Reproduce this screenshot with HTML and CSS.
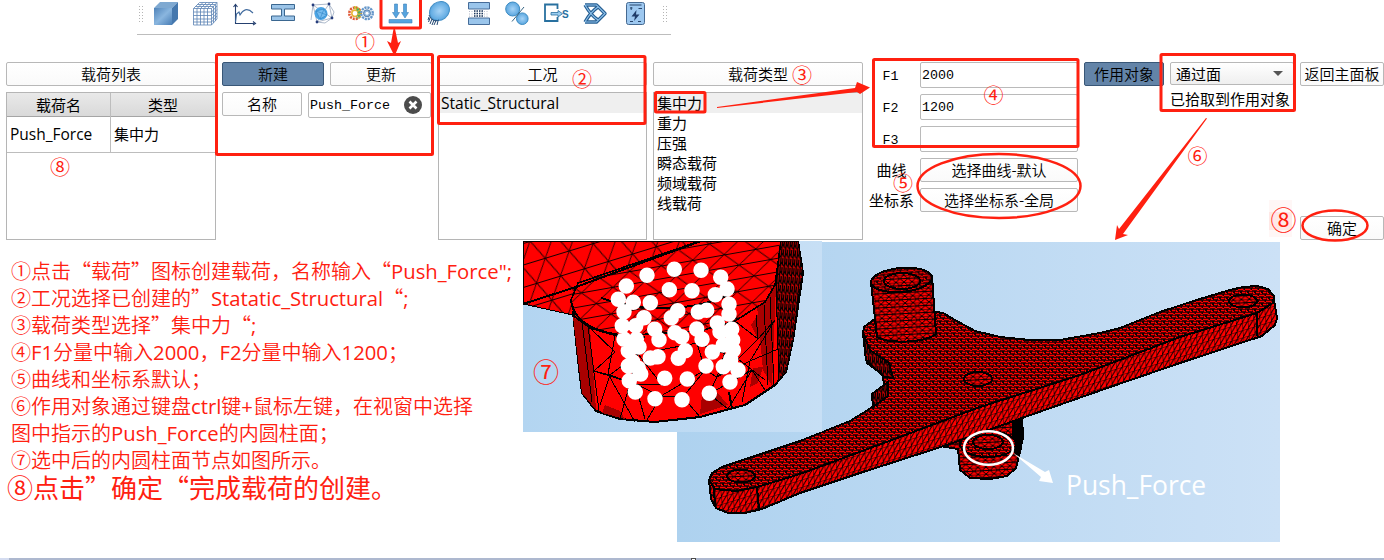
FILE: index.html
```html
<!DOCTYPE html>
<html lang="zh-CN">
<head>
<meta charset="utf-8">
<title>载荷创建</title>
<link rel="stylesheet" href="styles.css">
</head>
<body>
<header class="toolbar">
  <i class="grip"></i>
  <div class="tools">
    <svg class="tool" viewBox="0 0 39 28"><defs><linearGradient id="g1" x1="0" y1="0" x2="1" y2="1"><stop offset="0" stop-color="#4f83b9"/><stop offset=".5" stop-color="#8ab6df"/><stop offset="1" stop-color="#487db5"/></linearGradient><radialGradient id="g2"><stop offset="0" stop-color="#a6d3f6"/><stop offset="1" stop-color="#5ba7e0"/></radialGradient></defs><path d="M8 8 14 2H32L26 8Z" fill="#7fa9d1"/><path d="M26 8 32 2V19L26 25Z" fill="#4578ae"/><path d="M8 8H26V25H8Z" fill="url(#g1)"/></svg>
    <svg class="tool" viewBox="0 0 39 28"><path d="M8.500 8.500H26.500V25H8.500Z M8.500 8.500 14.500 2.500H32V19L26.500 25 M26.500 8.500 32 2.500 M12 8.500V25M15.500 8.500V25M19 8.500V25M22.500 8.500V25 M8.500 12H26.500L32 6M8.500 15.500H26.500L32 9.500M8.500 19H26.500L32 13M8.500 22H26.500L32 16 M10.500 6.500H28.500V23M12.500 4.500H30.500V21 M12 8.500 18 2.500M15.500 8.500 21.500 2.500M19 8.500 25 2.500M22.500 8.500 28.500 2.500" fill="#fff" stroke="#5c83b4" stroke-width=".8"/></svg>
    <svg class="tool" viewBox="0 0 39 28" fill="none" stroke="#25406f" stroke-width="1.100"><path d="M11.500 5V23.500H30M9.500 7 11.500 4.500 13.500 7M29 21.500 31.500 23.500 29 25"/><path d="M11.500 22 12.500 14 15 12 16 15C19 10 23 7 29 13" stroke="#416b9e"/></svg>
    <svg class="tool" viewBox="0 0 39 28" fill="#9bc4e8" stroke="#3b6790"><path d="M8.500 4.500H31.500V9H21.500V16H31.500V20.500H8.500V16H18.500V9H8.500Z"/></svg>
    <svg class="tool" viewBox="0 0 39 28"><path d="M11 5 27 4 30 18 15 22ZM11 5 30 18M27 4 15 22M9 20 11 5M27 4 32 12 30 18 23 23 15 22" fill="none" stroke="#8b9cb5" stroke-width=".7"/><circle cx="19" cy="13.500" r="6.500" fill="#4ba4e4"/><path d="M14 11 22 9 25 15 18 19Z M14 11 25 15M22 9 18 19" fill="#77bdf0" stroke="#2e83c4" stroke-width=".6"/><g fill="#263d7d"><circle cx="11" cy="5" r="1.400"/><circle cx="27" cy="4" r="1.400"/><circle cx="30" cy="18" r="1.400"/><circle cx="15" cy="22" r="1.400"/></g></svg>
    <svg class="tool" viewBox="0 0 39 28" fill="none"><circle cx="14" cy="13.300" r="5.700" stroke="#e05937" stroke-width="2.600" stroke-dasharray="2 1"/><path d="M13 7.500A6 6 0 0 1 17 18" stroke="#c6bd30" stroke-width="3" stroke-dasharray="2 .8"/><circle cx="14" cy="13.300" r="3.200" stroke="#e9b337" stroke-width="1.600"/><path d="M16 9A6 6 0 0 1 16 18" stroke="#51ad5a" stroke-width="2.500" stroke-dasharray="2 1"/><circle cx="26" cy="13.300" r="5.800" stroke="#6697ca" stroke-width="2.400" stroke-dasharray="2.200 .8"/><circle cx="26" cy="13.300" r="3.500" fill="#8fb5db" stroke="#547fac"/><circle cx="26" cy="13.300" r="1.500" fill="#fff"/></svg>
    <svg class="tool" viewBox="0 0 39 28" fill="#55a4df" stroke="#3e82b9" stroke-width=".6"><path d="M14.500 4H17.500V12.500H19.500L16 18 12.500 12.500H14.500ZM23.500 4H26.500V12.500H28.500L25 18 21.500 12.500H23.500Z"/><path d="M9 19.500H32V23H9Z"/></svg>
    <svg class="tool" viewBox="0 0 39 28"><ellipse cx="20.500" cy="11" rx="10.500" ry="9" transform="rotate(-38 20.500 11)" fill="url(#g2)" stroke="#438fc6"/><path d="M10 15C12 20 16 22 20 20M10 17 9 20M11 18 9.500 22M13 19 11 24M15 20 13 25M17 20.500 15 25M19 21 18 25" fill="none" stroke="#234872" stroke-width="1"/></svg>
    <svg class="tool" viewBox="0 0 39 28"><path d="M10.500 2.500H31.500V9H10.500ZM10.500 18H31.500V24.500H10.500Z" fill="#9ac5eb" stroke="#466c99"/><path d="M11 11.500H31M11 14H31M11 16.200H31" stroke="#b5bbc9" stroke-dasharray="1 1.500"/><path d="M16 11H26M16 13.500H26M16 16H26" stroke="#1d385c" stroke-width="1.400" stroke-dasharray="1.500 1"/></svg>
    <svg class="tool" viewBox="0 0 39 28" fill="url(#g2)" stroke="#3c8bc2"><circle cx="15.700" cy="9" r="7"/><circle cx="25.300" cy="18.700" r="5.800"/><path d="M27 7 15 21.500" stroke="#346281"/></svg>
    <svg class="tool" viewBox="0 0 39 28"><path d="M21.500 9V4.500H9V21H21.500V17" fill="none" stroke="#28709f" stroke-width="1.800"/><path d="M15 12.500H22V10.500L26.500 13.700 22 17V15H15Z" fill="#9bcdf0" stroke="#28709f" stroke-width=".8"/><text x="26" y="17.500" class="icon-s">S</text></svg>
    <svg class="tool" viewBox="0 0 39 28" fill="none" stroke="#245d91" stroke-width="3.400"><path d="M10 5H21.500L30 13.500 21.500 22H10M10 5 C14 12 17 16 23 20M10 22C14 15 17 11 23 7" stroke-linejoin="round"/><path d="M10 5H21.500L30 13.500 21.500 22H10M10 5 C14 12 17 16 23 20M10 22C14 15 17 11 23 7" stroke="#8fc2eb" stroke-width="1.100"/></svg>
    <svg class="tool" viewBox="0 0 39 28"><rect x="12.500" y="2.500" width="18" height="22" rx="2" fill="#9dc8f0" stroke="#456991"/><path d="M15.500 5H27.500M16 8H18.500M17.200 7V10M24.500 8.500H28M16 21.500H19M24 21.500H27" stroke="#29466d"/><path d="M22.500 10 17.500 16.500H21L20 21 25.500 14.500H22Z" fill="#203c69"/></svg>
  </div>
  <i class="grip"></i>
</header>

<main class="panel">
  <section class="stack">
    <button class="btn">载荷列表</button>
    <div class="box table">
      <div class="tr th"><span>载荷名</span><span>类型</span></div>
      <div class="tr td"><span>Push_Force</span><span>集中力</span></div>
    </div>
  </section>
  <section class="stack">
    <div class="pair"><button class="btn primary">新建</button><button class="btn">更新</button></div>
    <div class="pair name"><button class="btn">名称</button>
      <div class="field">Push_Force<svg class="clear" viewBox="0 0 18 18"><circle cx="9" cy="9" r="9" fill="#4c4c4c"/><path d="M5.500 5.500 12.500 12.500M12.500 5.500 5.500 12.500" stroke="#fff" stroke-width="2.600"/></svg></div></div>
  </section>
  <section class="stack">
    <button class="btn">工况</button>
    <ul class="box list"><li class="on">Static_Structural</li></ul>
  </section>
  <section class="stack">
    <button class="btn">载荷类型</button>
    <ul class="box list"><li class="on">集中力</li><li>重力</li><li>压强</li><li>瞬态载荷</li><li>频域载荷</li><li>线载荷</li></ul>
  </section>
  <section class="form">
    <label class="mono">F1</label><div class="field">2000</div>
    <label class="mono">F2</label><div class="field">1200</div>
    <label class="mono">F3</label><div class="field"></div>
    <label>曲线</label><button class="btn">选择曲线-默认</button>
    <label>坐标系</label><button class="btn">选择坐标系-全局</button>
  </section>
  <section class="stack"><button class="btn primary">作用对象</button></section>
  <section class="stack pick">
    <div class="select">通过面<i class="caret"></i></div>
    <span>已拾取到作用对象</span>
  </section>
  <section class="stack ends"><button class="btn">返回主面板</button><button class="btn ok">确定</button></section>
</main>

<div class="lower">
  <div class="notes">
    <p>①点击“载荷”图标创建载荷，名称输入“<b>Push_Force";</b></p>
    <p>②工况选择已创建的”<b class="wide">Statatic_Structural</b>“<b>;</b></p>
    <p>③载荷类型选择”集中力“<b>;</b></p>
    <p>④<b>F1</b>分量中输入<b>2000</b>，<b>F2</b>分量中输入<b>1200</b>；</p>
    <p>⑤曲线和坐标系默认；</p>
    <p>⑥作用对象通过键盘<b>ctrl</b>键<b>+</b>鼠标左键，在视窗中选择</p>
    <p>图中指示的<b>Push_Force</b>的内圆柱面；</p>
    <p>⑦选中后的内圆柱面节点如图所示。</p>
    <p class="big">⑧点击”确定“完成载荷的创建。</p>
  </div>
  <svg class="figure" viewBox="523 241 757 301">
    <defs>
      <linearGradient id="skyA"><stop offset="0" stop-color="#aed2ef"/><stop offset="1" stop-color="#cce1f6"/></linearGradient>
      <linearGradient id="skyB"><stop offset="0" stop-color="#b3d5f1"/><stop offset="1" stop-color="#c7dff5"/></linearGradient>
      <pattern id="fine" width="7" height="6" patternUnits="userSpaceOnUse"><rect width="7" height="6" fill="#150000"/><path d="M0 1.500H4.500M3 4.500H6.500M6 1.500H7M0 4.500H1" stroke="#f00" stroke-width="1.500"/><path d="M4 2.500H6M0 5.500H2" stroke="#e00"/></pattern>
      <pattern id="side" width="6" height="7" patternUnits="userSpaceOnUse" patternTransform="rotate(-17) skewX(-12)"><rect width="6" height="7" fill="#f00"/><path d="M0 0H6M0 0V7M0 7 6 0" stroke="#000" stroke-width="1"/></pattern>
      <pattern id="cyl" width="8" height="7" patternUnits="userSpaceOnUse" patternTransform="rotate(-3)"><rect width="8" height="7" fill="#f00"/><path d="M0 0H8M0 3.500H8M0 0 4 3.500 0 7M8 0 4 3.500 8 7" fill="none" stroke="#000" stroke-width="1"/></pattern>
      <pattern id="plate" width="25" height="42" patternUnits="userSpaceOnUse" patternTransform="translate(530 241) rotate(-17) skewX(-8)"><rect width="25" height="42" fill="#f00"/><path d="M0 .5H25M0 21H25M0 0 12.500 21 25 0M0 42 12.500 21 25 42" fill="none" stroke="#000" stroke-width=".9"/></pattern>
      <pattern id="face" width="32" height="26" patternUnits="userSpaceOnUse" patternTransform="translate(600 250) rotate(-10) skewX(-14)"><rect width="32" height="26" fill="#f00"/><path d="M0 .5H32M0 13H32M0 0 16 13 32 0M0 26 16 13 32 26" fill="none" stroke="#000" stroke-width=".9"/></pattern>
      <pattern id="hatch" width="4" height="9" patternUnits="userSpaceOnUse" patternTransform="rotate(5)"><rect width="4" height="9" fill="#d00"/><path d="M.5 0V9M2.500 0V6M0 3 4 8" stroke="#000" stroke-width="1.400"/></pattern>
    </defs>
    <rect x="677" y="242" width="603" height="300" fill="url(#skyA)"/>
    <g stroke="#000" stroke-width="2" shape-rendering="crispEdges">
      <path d="M940 446 958 449 960 470 970 478 990 479 1007 476 1016 468 1021 448 1022 416 960 435Z" fill="url(#cyl)"/>
      <path d="M1013 421 1022 416 1023 438 1018 457 1013 449Z"/>
      <ellipse cx="988" cy="444" rx="28" ry="13" fill="url(#fine)"/><ellipse cx="988" cy="442" rx="15" ry="7" fill="url(#cyl)"/>
      <path d="M709 480 711 499 716 508 728 513 745 513 762 509 800 493 860 473 947 445 1022 418 1113 386 1180 363 1262 336 1275 325 1277 318 1274 300 1180 335 980 403 757 484Z" fill="url(#side)"/>
      <path d="M709 480 712 473 722 467 800 441 850 421 868 410 873 406 872 394 884 386 883 375 867 363 863 333 864 327 876 318 936 312 943 313 955 320 975 331 1000 337 1030 340 1060 340 1100 333 1120 328 1160 312 1200 299 1230 290 1243 287 1257 286 1268 289 1274 296 1273 303 1257 313 1180 337 1080 375 980 407 900 437 800 474 757 487 736 491 715 489Z" fill="url(#fine)"/>
      <path d="M863 333 866 360 884 377 893 378 889 363 870 350Z M872 394 888 382 888 396 873 407Z" fill="url(#hatch)"/>
      <path d="M871 282 877 337C889 344 925 343 936 334L932 276Z" fill="url(#cyl)"/>
      <ellipse cx="901.500" cy="280" rx="30.500" ry="12" transform="rotate(-5 901 280)" fill="url(#fine)"/>
      <ellipse cx="902" cy="281" rx="18" ry="8" fill="url(#cyl)"/>
      <ellipse cx="978" cy="379" rx="14" ry="7" fill="url(#cyl)"/>
      <ellipse cx="741" cy="476" rx="14" ry="6.500" fill="url(#cyl)"/>
      <ellipse cx="1243" cy="301" rx="14" ry="6.500" fill="url(#cyl)"/>
      <path d="M757 487 759 509M1257 313V336M714 489 715 506" fill="none"/>
    </g>
    <g fill="none" stroke="#fff" stroke-width="2.500"><ellipse cx="988.500" cy="448" rx="24.500" ry="16.800"/></g>
    <path d="M1013 453 1045 472 1049 470 1053 483 1039 481 1041 477Z" fill="#fff"/>
    <text x="1066" y="495" class="callout">Push_Force</text>
    <rect x="523" y="241" width="299" height="191" fill="url(#skyB)"/>
    <g stroke="#000" shape-rendering="crispEdges">
      <path d="M523 241H701L578 288 573 315 523 304Z" fill="url(#plate)"/>
      <path d="M573 312 578 360 582 393 596 411 620 419 655 422 700 417 745 405 775 385 786 372 793 340 803 273 798 241H700Z" fill="#f00" stroke-width="2"/>
      <path d="M573 317 590 328 596 410 582 393ZM757 306 776 285 772 386 763 370ZM702 396 717 392 728 405 700 414ZM605 405 620 411 625 419 602 413ZM751 325 762 308 768 325 758 339ZM753 368 763 367 758 383 750 387Z" fill="#a90000" stroke="none"/>
      <path d="M700 241 578 283 571 300 575 317 590 328 617 336 700 331 735 321 765 302 775 285 781 241Z" fill="url(#face)" stroke-width="1.600"/>
      <path d="M781 241H798L803 273 798 300 793 340 786 372 779 380 776 285Z" fill="url(#hatch)"/>
      <path d="M590 328 615 352 594 371 610 375 638 354 662 385 635 384 610 375 600 405M615 336 608 374 635 422M638 333V354L620 419M594 371 635 384 645 419M635 384 661 396 647 420M661 396 683 397 700 417M683 397 705 370 717 377 709 394 728 409M661 396 705 370M638 354 697 343 705 370M697 343 738 359 717 377 750 361 742 402M735 321 717 377M735 321 758 339 738 359 765 380M758 339 775 320 750 361 778 349M758 339 756 315M728 409 752 370 765 390M709 394 752 370M582 322 592 402M588 326 599 411M764 305 768 385M770 297 774 385" fill="none"/>
      <path d="M523 304 576 287 701 241M571 300C574 325 603 336 645 337M729 392 732 409M601 298C635 310 690 315 735 292" fill="none" stroke-width="2"/>
    </g>
    <g id="nodes" stroke="#fff" stroke-width="15.500" stroke-linecap="round" fill="none">
      <path d="M626.300 286h.01M647 275.300h.01M674.300 269.300h.01M701 270.300h.01M720.700 277.300h.01M727 289h.01M715.300 294.700h.01M618.300 299.300h.01M633.300 302.300h.01M650.300 302.700h.01M669.300 289.700h.01M692 290.700h.01M624 311.700h.01M644 317.700h.01M677.700 310.700h.01M671.300 317.700h.01M698.300 312h.01M706.700 310.300h.01M729 304.300h.01M729 314h.01M717.300 323h.01M731.700 329.300h.01M622.300 325.700h.01M635.700 325.700h.01M654.700 329.300h.01M659 339.700h.01M675 332.700h.01M681.700 336.700h.01M696.700 329h.01M702 339.300h.01M624 339.300h.01M636.300 339.300h.01M720 331.700h.01M732.700 340h.01M639 347h.01M628.300 350.700h.01M650.300 358h.01M658 356.700h.01M685.300 350.700h.01M678.300 358.300h.01M712.300 352h.01M733.300 350h.01M723.300 345h.01M706 366h.01M723.300 366.700h.01M738 370h.01M730.700 359.300h.01M628.300 366h.01M638.300 368.300h.01M640.700 374h.01M629.300 380.700h.01M664.700 378.300h.01M687.300 379h.01M730 382h.01M709.300 393.300h.01M682 399.700h.01M655 398.700h.01M635.300 392h.01M632.700 361.700h.01"/>
    </g>
  </svg>
</div>
<footer class="edge"><i></i></footer>

<svg class="marks" viewBox="0 0 1384 560">
  <path d="M1269 200H1292V237H1269Z" fill="#fff7f6"/><path d="M1269 212H1292V230H1269Z" fill="#ffe8e6"/>
  <g fill="none" stroke="#ff2010" stroke-width="3">
    <rect x="381" y="-3" width="39.500" height="31" rx="1"/>
    <rect x="216.500" y="54.500" width="216" height="100" rx="1"/>
    <rect x="438.500" y="56.500" width="206.500" height="67" rx="1"/>
    <rect x="655.500" y="92.500" width="49.500" height="19.500" rx="1"/>
    <rect x="873.500" y="59.500" width="204.500" height="87" rx="1"/>
    <rect x="1161" y="54.500" width="133.500" height="56" rx="1"/>
    <ellipse cx="999" cy="186" rx="81.500" ry="32" stroke-width="2.500"/>
    <ellipse cx="1335" cy="225.500" rx="32.500" ry="15" stroke-width="2.500"/>
  </g>
  <path d="M393.500 29H395L398 43 401 41 395 55H394L387 41 391 43ZM717 107 855 88 857 82 870 87.500 860 94 857 92 717 108ZM1206 118 1207 118.500 1123 234 1128 235 1115 240 1117 225 1119 229Z" fill="#ff2010"/>
  <g class="nums">
    <text x="365" y="49.500">①</text><text x="582" y="86.500">②</text><text x="802" y="82.500">③</text><text x="993.500" y="102.500">④</text><text x="903" y="190.500">⑤</text><text x="1197.500" y="163.500">⑥</text><text x="60" y="174.500">⑧</text>
    <text x="1283.500" y="229.500" class="lg">⑧</text><text x="546" y="381.500" class="lg">⑦</text>
  </g>
</svg>
</body>
</html>
```
FILE: styles.css
```css
* { box-sizing: border-box; }
body {
  margin: 0;
  width: 1384px;
  height: 560px;
  position: relative;
  overflow: hidden;
  display: flex;
  flex-direction: column;
  background: #fff;
  color: #000;
  font: 15px/20px "Noto Sans CJK SC", sans-serif;
}
.toolbar {
  height: 35px;
  width: 534px;
  margin-left: 137px;
  flex: none;
  display: flex;
  border-bottom: 1px solid #bdbdbd;
}
.grip {
  width: 5px;
  height: 17px;
  margin: 5px 0 0 1px;
  background: radial-gradient(circle, #b5b5b5 .7px, transparent .9px) 0 0 / 3px 3px;
}
.tools { display: flex; margin-left: 3px; margin-right: 8px; }
.tool { width: 39px; height: 28px; display: block; }
.icon-s { font: bold 10px "Liberation Sans", sans-serif; fill: #28709f; }

.panel {
  margin-top: 27px;
  padding-left: 6px;
  height: 178px;
  flex: none;
  display: grid;
  grid-template-columns: 210px 210px 209px 210px 209px 80px 124px 84px;
  column-gap: 6px;
}
.stack { display: flex; flex-direction: column; gap: 6px; min-width: 0; }
.btn {
  font: inherit;
  font-weight: 350;
  line-height: 20px;
  height: 24px;
  padding: 0;
  flex: none;
  color: #000;
  white-space: nowrap;
  border: 1px solid #b8b8b8;
  border-radius: 2px;
  background: linear-gradient(#fff, #fafafa);
}
.btn.primary { background: #6384a8; border-color: #395777; }
.box { border: 1px solid #b5b5b5; height: 148px; margin: 0; padding: 0; }
.tr { display: grid; grid-template-columns: 104px 1fr; }
.th { height: 24px; background: linear-gradient(#e9e9e9, #d9d9d9); border-bottom: 1px solid #a5a5a5; text-align: center; line-height: 24px; }
.th span:first-child, .td span:first-child { border-right: 1px solid #bdbdbd; }
.td { height: 36px; line-height: 35px; border-bottom: 1px solid #bdbdbd; font-family: "Open Sans", "Noto Sans CJK SC", sans-serif; }
.td span { padding-left: 3px; }
.td span:first-child { font-size: 15.5px; }
.pair { display: grid; grid-template-columns: 102px 102px; gap: 6px; }
.pair.name { grid-template-columns: 80px 123px; }
.field {
  height: 26px;
  border: 1px solid #bababa;
  border-radius: 2px;
  display: flex;
  align-items: center;
  padding-left: 1px;
  font: 13.33px "Liberation Mono", monospace;
}
.clear { width: 18px; height: 18px; margin-left: 14px; }
.list { list-style: none; font-family: "Open Sans", "Noto Sans CJK SC", sans-serif; }
.list li { height: 20px; line-height: 20px; padding-left: 3px; }
.list .on { background: #efefef; }
.list .on:only-child { font-size: 15.6px; padding-left: 2px; }
.form {
  display: grid;
  grid-template-columns: 45px 158px;
  column-gap: 6px;
  grid-template-rows: 26px 26px 26px 24px 24px;
  row-gap: 6px;
  align-items: center;
}
.form label { text-align: center; white-space: nowrap; }
.form .mono { font: 13.33px "Liberation Mono", monospace; padding: 3px 2px 0 0; }
.select {
  height: 23px;
  border: 1px solid #b8b8b8;
  border-radius: 2px;
  background: linear-gradient(#fff, #efefef);
  display: flex;
  align-items: center;
  justify-content: space-between;
  padding: 0 10px 0 5px;
}
.caret { border: 5px solid transparent; border-top-color: #555; border-bottom: 0; }
.pick { gap: 4px; white-space: nowrap; }
.ends { justify-content: space-between; }

.lower { display: flex; height: 302px; margin-top: 1px; flex: none; }
.notes {
  width: 523px;
  padding: 16px 0 0 11px;
  color: #ff2010;
  font-size: 20px;
  line-height: 27px;
  font-weight: 350;
  white-space: nowrap;
}
.notes p { margin: 0; height: 27px; }
.notes b { font-family: "Open Sans", sans-serif; font-size: 20.3px; line-height: 20px; font-weight: 400; }
.notes .big { font-size: 26px; margin-left: -4px; font-weight: 400; line-height: 28px; }
.figure { width: 757px; height: 301px; display: block; flex: none; }
.callout { font: 26.4px "Open Sans", sans-serif; fill: #fff; }
.edge { height: 2px; margin-top: 15px; background: linear-gradient(90deg, #d4dcf0 9px, #adb8cf 9px); }
.edge i { display: block; width: 5px; height: 2px; margin-left: 691px; background: #fff; border: 1px solid #4b4b4b; border-bottom: 0; }
.marks { position: absolute; left: 0; top: 0; width: 1384px; height: 560px; pointer-events: none; }
.nums text { font: 20px "Noto Sans CJK SC", sans-serif; fill: #ff2010; text-anchor: middle; }
.nums .lg { font-size: 26px; }
```
